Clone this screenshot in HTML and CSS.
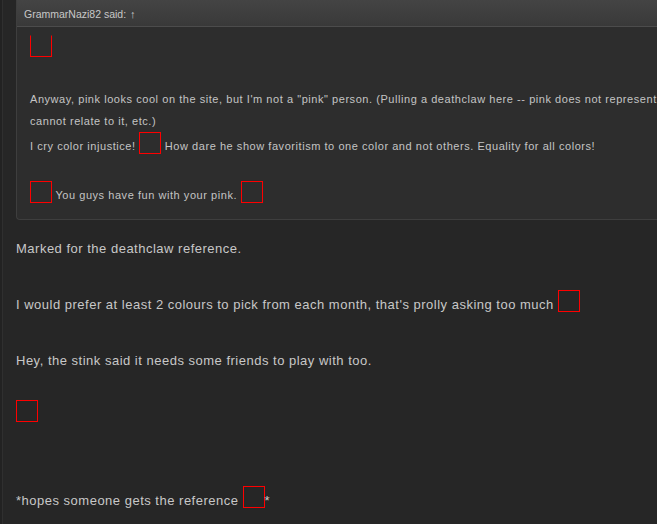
FILE: index.html
```html
<!DOCTYPE html>
<html>
<head>
<meta charset="utf-8">
<link rel="stylesheet" href="styles.css">
</head>
<body>
<div class="page">
  <div class="post">
    <div class="quote">
      <div class="quote-head">GrammarNazi82 said: <span class="arrow">↑</span></div>
      <div class="quote-body">
        <div class="quote-lead"><span class="smilie clipped"></span></div>
        <br>
        Anyway, pink looks cool on the site, but I'm not a "pink" person. (Pulling a deathclaw here -- pink does not represent me, I<br>
        cannot relate to it, etc.)<br>
        I cry color injustice! <span class="smilie"></span> How dare he show favoritism to one color and not others. Equality for all colors!<br>
        <br>
        <div class="quote-tail"><span class="smilie"></span> You guys have fun with your pink. <span class="smilie"></span></div>
      </div>
    </div>
    <div class="message">
      Marked for the deathclaw reference.<br>
      <br>
      I would prefer at least 2 colours to pick from each month, that's prolly asking too much <span class="smilie"></span><br>
      <br>
      Hey, the stink said it needs some friends to play with too.<br>
      <br>
      <span class="smilie solo"></span><br>
      <br>
      <br>
      *hopes someone gets the reference <span class="smilie"></span>*
    </div>
  </div>
</div>
</body>
</html>
```

FILE: styles.css
```css
html, body {
  margin: 0;
  padding: 0;
  background: #262626;
  overflow: hidden;
}
body {
  width: 657px;
  height: 524px;
  font-family: "Liberation Sans", Arial, sans-serif;
  color: #c4c4c4;
}
.page {
  height: 524px;
  border-left: 2px solid #222222;
  box-shadow: inset 1px 0 0 #2f2f2f;
  padding-left: 14px;
}
.post {
  width: 800px;
}
.quote {
  border: 1px solid #3e3e3e;
  border-top: none;
  border-radius: 0 0 4px 4px;
  background: #2d2d2d;
}
.quote-head {
  height: 27px;
  box-sizing: border-box;
  padding: 8px 0 0 7px;
  font-size: 10.5px;
  color: #c8c8c8;
  background: linear-gradient(#444444, #393939);
  border-bottom: 1px solid #4c4c4c;
}
.arrow {
  font-size: 11px;
  margin-left: 1px;
}
.quote-body {
  padding: 8px 13px 13px;
  font-size: 11px;
  letter-spacing: 0.55px;
  line-height: 22px;
  white-space: nowrap;
}
.quote-lead {
  margin-bottom: 6px;
}
.quote-tail {
  padding-top: 2px;
}
.smilie {
  display: inline-block;
  width: 20px;
  height: 20px;
  border: 1px solid #ff0000;
  vertical-align: -4px;
}
.smilie.clipped {
  border-top-color: transparent;
}
.message {
  padding-top: 15px;
  font-size: 13px;
  letter-spacing: 0.5px;
  line-height: 28px;
  color: #c8c8c8;
}
.message .smilie {
  margin: -6px 0;
  vertical-align: 3px;
}
.message .smilie.solo {
  vertical-align: 5px;
}
```
